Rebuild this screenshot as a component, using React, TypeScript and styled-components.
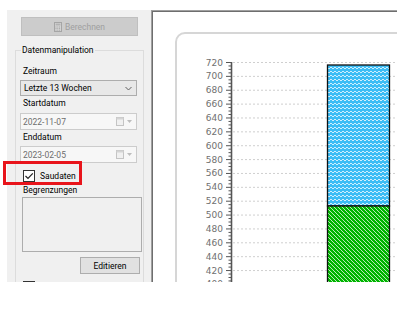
import React from "react";
import styled, { createGlobalStyle } from "styled-components";

const GlobalStyle = createGlobalStyle`
  html, body {
    margin: 0;
    padding: 0;
    background: #ffffff;
  }
  body {
    font-family: Roboto, "Liberation Sans", sans-serif;
  }
`;

const Screen = styled.div`
  position: relative;
  box-sizing: border-box;
  width: 397px;
  height: 282px;
  padding: 10px 0 0 7px;
  display: flex;
  overflow: hidden;
  background: #ffffff;
`;

const SidePanel = styled.div`
  flex: none;
  width: 144px;
  box-sizing: border-box;
  padding-top: 7px;
  display: flex;
  flex-flow: column;
  background: #f0f0f0;
  font-size: 8.5px;
  color: #000;
`;

const WinButton = styled.button<{ disabled?: boolean }>`
  flex: none;
  box-sizing: border-box;
  display: flex;
  align-items: center;
  justify-content: center;
  gap: 3px;
  padding: 0;
  font-family: inherit;
  font-size: 8.5px;
  border: 1px solid ${(p) => (p.disabled ? "#bfbfbf" : "#adadad")};
  background: ${(p) => (p.disabled ? "#cccccc" : "#e1e1e1")};
  color: ${(p) => (p.disabled ? "#a0a0a0" : "#000")};
`;

const CalcButton = styled(WinButton)`
  margin-left: 14px;
  width: 117px;
  height: 19px;
`;

const EditButton = styled(WinButton)`
  align-self: flex-end;
  margin: 5px 3px 0 0;
  width: 60px;
  height: 17px;
`;

const Group = styled.fieldset`
  box-sizing: border-box;
  flex: none;
  margin: 9px 0 0 8px;
  padding: 0 0 0 4px;
  width: 129px;
  height: 260px;
  min-width: 0;
  border: 1px solid #dcdcdc;
  border-bottom: none;
  display: flex;
  flex-flow: column;
`;

const Legend = styled.legend`
  margin-left: 1px;
  padding: 0 1px;
  line-height: 11px;
`;

const Label = styled.div<{ $top: number }>`
  flex: none;
  margin-top: ${(p) => p.$top}px;
  padding-left: 3px;
  line-height: 12px;
  height: 12px;
`;

const Combo = styled.div`
  flex: none;
  box-sizing: border-box;
  margin-top: 3px;
  width: 117px;
  height: 16px;
  display: flex;
  align-items: center;
  justify-content: space-between;
  padding: 0 4px 0 3px;
  border: 1px solid #adadad;
  background: #e8e8e8;
`;

const DateBox = styled.div<{ $top: number }>`
  flex: none;
  box-sizing: border-box;
  margin-top: ${(p) => p.$top}px;
  width: 117px;
  height: 17px;
  display: flex;
  align-items: center;
  justify-content: space-between;
  padding: 0 4px 0 2px;
  border: 1px solid #cccccc;
  background: #f7f7f7;
  color: #6d6d6d;
`;

const DateIcons = styled.div`
  display: flex;
  align-items: center;
  gap: 3px;
`;

const CheckRow = styled.label<{ $top: number }>`
  flex: none;
  display: flex;
  align-items: center;
  gap: 5px;
  margin: ${(p) => p.$top}px 0 0 3px;
  height: 12px;
`;

const CheckBox = styled.span`
  box-sizing: border-box;
  width: 12px;
  height: 12px;
  display: flex;
  align-items: center;
  justify-content: center;
  border: 1px solid #333333;
  background: #ffffff;
`;

const LimitsBox = styled.div`
  flex: none;
  box-sizing: border-box;
  margin: 1px 0 0 2px;
  width: 120px;
  height: 55px;
  border: 1px solid #adadad;
  background: #f0f0f0;
`;

const Highlight = styled.div`
  position: absolute;
  left: 3px;
  top: 161px;
  width: 79px;
  height: 24px;
  box-sizing: border-box;
  border: 3px solid #e8141b;
  pointer-events: none;
`;

const ChartArea = styled.div`
  flex: 1;
  min-width: 0;
  border-left: 1px solid #a0a0a0;
  border-top: 1px solid #a0a0a0;
  box-shadow: inset 1px 1px 0 #6e6e6e;
  background: #ffffff;
  padding: 21px 0 0 23px;
  overflow: hidden;
`;

const ChartCard = styled.div`
  box-sizing: border-box;
  width: 260px;
  height: 300px;
  border: 2px solid #d6d6d6;
  border-radius: 10px 10px 0 0;
  overflow: hidden;
`;

const CalcIcon = () => (
  <svg width="8" height="10" viewBox="0 0 8 10">
    <rect x="0.5" y="0.5" width="7" height="9" fill="#d6d6d6" stroke="#a5a5a5" />
    <rect x="1.5" y="1.5" width="5" height="2" fill="#b3b3b3" />
    {[0, 1, 2].map((r) =>
      [0, 1, 2].map((c) => (
        <rect key={`${r}${c}`} x={1.5 + c * 1.8} y={4.5 + r * 1.6} width="1" height="1" fill="#a5a5a5" />
      ))
    )}
  </svg>
);

const Chevron = () => (
  <svg width="7" height="5" viewBox="0 0 7 5">
    <path d="M0.5 1 L3.5 4 L6.5 1" fill="none" stroke="#606060" strokeWidth="1" />
  </svg>
);

const CalendarGlyph = () => (
  <svg width="8" height="9" viewBox="0 0 8 9">
    <rect x="0.5" y="0.5" width="7" height="8" fill="#f0f0f0" stroke="#c4c4c4" />
    <rect x="0.5" y="0.5" width="7" height="2" fill="#d4d4d4" />
  </svg>
);

const DropArrow = () => (
  <svg width="5" height="3" viewBox="0 0 5 3">
    <path d="M0 0 L5 0 L2.5 3 Z" fill="#bdbdbd" />
  </svg>
);

const CheckMark = () => (
  <svg width="10" height="10" viewBox="0 0 10 10">
    <path d="M1.5 5 L4 7.5 L8.8 2.3" fill="none" stroke="#222" strokeWidth="1.2" />
  </svg>
);

const yOf = (v: number) => 28 + (720 - v) * 0.6935;

const BarChart = () => {
  const ticks: number[] = [];
  for (let v = 380; v <= 720; v += 5) ticks.push(v);
  const majors = ticks.filter((v) => v % 20 === 0 && v >= 400);
  return (
    <svg width="256" height="296" viewBox="0 0 256 296">
      <defs>
        <pattern id="wave" width="4" height="4" patternUnits="userSpaceOnUse">
          <rect width="4" height="4" fill="#3dbdf5" />
          <path d="M0 3 L2 1 L4 3" fill="none" stroke="#ffffff" strokeOpacity="0.85" strokeWidth="0.9" />
        </pattern>
        <pattern id="hatch" width="4" height="4" patternUnits="userSpaceOnUse">
          <rect width="4" height="4" fill="#00b400" />
          <path d="M-1 -1 L5 5 M-1 3 L1 5 M3 -1 L5 1" stroke="#ffffff" strokeOpacity="0.9" strokeWidth="0.8" />
        </pattern>
      </defs>
      {majors.map((v) => (
        <line key={`g${v}`} x1="56" x2="256" y1={yOf(v) + 0.5} y2={yOf(v) + 0.5} stroke="#cfcfcf" strokeDasharray="2 2" />
      ))}
      <rect x="150.5" y="31" width="62" height="141" fill="url(#wave)" stroke="#111" strokeWidth="1.3" />
      <rect x="150.5" y="172" width="62" height="140" fill="url(#hatch)" stroke="#111" strokeWidth="1.3" />
      <line x1="54.5" x2="54.5" y1={yOf(720)} y2="296" stroke="#555" strokeWidth="1.6" />
      {ticks.map((v) => (
        <line
          key={`t${v}`}
          x1={v % 20 === 0 ? 49 : 51.5}
          x2="55"
          y1={yOf(v) + 0.5}
          y2={yOf(v) + 0.5}
          stroke="#555"
          strokeWidth="1"
        />
      ))}
      {majors.map((v) => (
        <text
          key={`l${v}`}
          x="46"
          y={yOf(v) + 3.5}
          textAnchor="end"
          fontFamily="'DejaVu Sans', sans-serif"
          fontSize="9"
          fill="#707070"
        >
          {v}
        </text>
      ))}
    </svg>
  );
};

export default function App() {
  return (
    <>
      <GlobalStyle />
      <Screen>
        <SidePanel>
          <CalcButton disabled>
            <CalcIcon />
            Berechnen
          </CalcButton>
          <Group>
            <Legend>Datenmanipulation</Legend>
            <Label $top={9}>Zeitraum</Label>
            <Combo>
              <span>Letzte 13 Wochen</span>
              <Chevron />
            </Combo>
            <Label $top={1}>Startdatum</Label>
            <DateBox $top={4}>
              <span>2022-11-07</span>
              <DateIcons>
                <CalendarGlyph />
                <DropArrow />
              </DateIcons>
            </DateBox>
            <Label $top={1}>Enddatum</Label>
            <DateBox $top={3}>
              <span>2023-02-05</span>
              <DateIcons>
                <CalendarGlyph />
                <DropArrow />
              </DateIcons>
            </DateBox>
            <CheckRow $top={7}>
              <CheckBox>
                <CheckMark />
              </CheckBox>
              Saudaten
            </CheckRow>
            <Label $top={2}>Begrenzungen</Label>
            <LimitsBox />
            <EditButton>Editieren</EditButton>
            <CheckRow $top={7}>
              <CheckBox />
            </CheckRow>
          </Group>
        </SidePanel>
        <ChartArea>
          <ChartCard>
            <BarChart />
          </ChartCard>
        </ChartArea>
        <Highlight />
      </Screen>
    </>
  );
}
